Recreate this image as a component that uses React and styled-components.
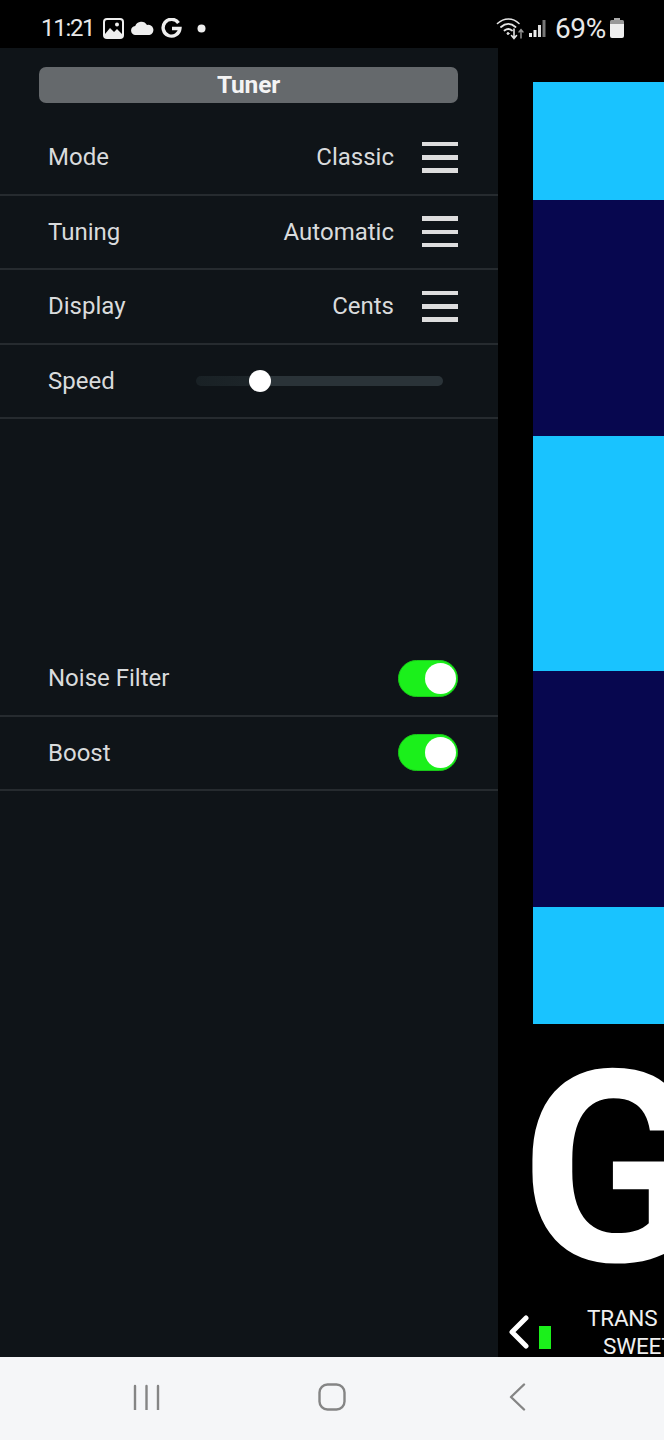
import React from 'react';
import styled, { createGlobalStyle } from 'styled-components';

const Global = createGlobalStyle`
  html, body { margin: 0; padding: 0; background: #000; }
  * { box-sizing: border-box; }
`;

const Screen = styled.div`
  width: 664px;
  height: 1440px;
  display: flex;
  flex-direction: column;
  overflow: hidden;
  background: #000;
  font-family: Roboto, "Liberation Sans", sans-serif;
  color: #d9dbdc;
`;

const StatusBar = styled.div`
  height: 48px;
  flex: none;
  display: flex;
  align-items: center;
  justify-content: space-between;
  padding: 0 40px 0 41px;
  color: #e8e8e8;
`;

const StatusGroup = styled.div`
  display: flex;
  align-items: center;
  height: 100%;
  padding-top: 8px;
`;

const Clock = styled.span`
  font-size: 24px;
  letter-spacing: -1.3px;
  margin-right: 9px;
`;

const Battery = styled.span`
  font-size: 28px;
  letter-spacing: -0.3px;
  margin: 0 4px 0 9px;
`;

const Gap = styled.span`
  width: ${p => p.$w}px;
`;

const Main = styled.div`
  flex: 1;
  min-height: 0;
  display: flex;
`;

const Panel = styled.div`
  width: 498px;
  flex: none;
  background: #0f1418;
  padding-top: 19px;
`;

const TitleBar = styled.div`
  width: 419px;
  height: 36px;
  margin: 0 0 18px 39px;
  padding-bottom: 2px;
  border-radius: 7px;
  background: #65696c;
  color: #f4f4f4;
  font-size: 24.5px;
  font-weight: 700;
  display: flex;
  align-items: center;
  justify-content: center;
  letter-spacing: -0.2px;
`;

const Row = styled.div`
  height: 74.5px;
  display: flex;
  align-items: center;
  justify-content: space-between;
  padding: 0 40px 0 48px;
  border-bottom: 2px solid #262b2f;
  font-size: 24px;
`;

const Value = styled.div`
  display: flex;
  align-items: center;
  gap: 28px;
`;

const Menu = styled.div`
  width: 36px;
  height: 31px;
  display: flex;
  flex-direction: column;
  justify-content: space-between;
`;

const MenuBar = styled.span`
  display: block;
  height: 4.5px;
  background: #dddddd;
`;

const Track = styled.div`
  position: relative;
  width: 247px;
  height: 10px;
  margin-right: 15px;
  border-radius: 5px;
  background: linear-gradient(90deg, #192125 0, #1d2529 26%, #2a3338 26%, #2a3338 100%);
`;

const Thumb = styled.span`
  position: absolute;
  left: 53px;
  top: -6px;
  width: 22px;
  height: 22px;
  border-radius: 50%;
  background: #fff;
`;

const Spacer = styled.div`
  height: 223px;
`;

const Toggle = styled.div`
  width: 60px;
  height: 37px;
  border-radius: 19px;
  background: #1bf01b;
  border: 1px solid #19c819;
  display: flex;
  align-items: center;
  justify-content: flex-end;
  padding-right: 1px;
`;

const Knob = styled.span`
  width: 31px;
  height: 31px;
  border-radius: 50%;
  background: #fff;
`;

const Side = styled.div`
  flex: 1;
  min-width: 0;
  overflow: hidden;
  display: flex;
  flex-direction: column;
  padding-top: 34px;
`;

const Blocks = styled.div`
  margin-left: 35px;
  display: flex;
  flex-direction: column;
`;

const Block = styled.div`
  height: ${p => p.$h}px;
  background: ${p => (p.$dark ? '#07074f' : '#19c3ff')};
`;

const BigNote = styled.div`
  height: 272px;
  padding: 0 0 0 22px;
  font-size: 268px;
  font-weight: 700;
  line-height: 290px;
  color: #fff;
  white-space: nowrap;
`;

const Foot = styled.div`
  flex: 1;
  min-height: 0;
  display: flex;
  align-items: flex-end;
  padding-left: 10px;
`;

const Chevron = styled.svg`
  flex: none;
  margin-bottom: 8px;
`;

const Level = styled.span`
  width: 12px;
  height: 23px;
  margin: 0 0 8px 10px;
  background: #1bf01b;
  flex: none;
`;

const Names = styled.div`
  margin: 0 0 -3px 36px;
  font-size: 22.5px;
  line-height: 28px;
  color: #f0f0f0;
  white-space: nowrap;
  letter-spacing: -0.2px;
`;

const Indented = styled.div`
  padding-left: 16px;
`;

const NavBar = styled.div`
  height: 83px;
  flex: none;
  background: #f5f6f8;
  display: flex;
  align-items: center;
  padding: 0 0 4px 133px;
  color: #858585;
`;

const NavSlot = styled.div`
  display: flex;
  margin-right: ${p => p.$gap}px;
`;

function PictureIcon() {
  return (
    <svg width="21" height="21" viewBox="0 0 21 21">
      <rect x="0" y="0" width="21" height="21" rx="4" fill="#eee" />
      <rect x="2" y="2" width="17" height="17" rx="2" fill="#000" />
      <path d="M2 16l5-6 4 4 3-3 5 5v3H2z" fill="#eee" />
      <circle cx="14" cy="6.5" r="2" fill="#eee" />
    </svg>
  );
}

function CloudIcon() {
  return (
    <svg width="23" height="14" viewBox="0 0 23 14">
      <path d="M5 14a4.5 4.5 0 0 1-.8-9A6.5 6.5 0 0 1 16 4a5 5 0 0 1 2.5 10z" fill="#eee" />
    </svg>
  );
}

function GoogleIcon() {
  return (
    <svg width="21" height="21" viewBox="0 0 21 21">
      <path d="M17.5 5a8.4 8.4 0 1 0 1.4 5.5H11" fill="none" stroke="#eee" strokeWidth="3.4" />
    </svg>
  );
}

function WifiIcon() {
  return (
    <svg width="29" height="24" viewBox="0 0 29 24" fill="none" stroke="#e4e4e4" strokeLinecap="round">
      <path d="M1.5 7.5C8 1.5 17 1.5 23 7.5" strokeWidth="1.6" />
      <path d="M5 11c4.500-4 10-4 14.500 0" strokeWidth="1.800" />
      <path d="M8.500 14.500c2.500-2 5-2 7.500 0" strokeWidth="1.800" />
      <circle cx="12" cy="17.500" r="1" fill="#e4e4e4" />
      <path d="M18 13v9M15.500 19.500l2.500 3 2.500-3" strokeWidth="1.600" />
      <path d="M25 22v-8M23 16l2-2.500 2 2.500" stroke="#999" strokeWidth="1.400" />
    </svg>
  );
}

function SignalIcon() {
  return (
    <svg width="17" height="17" viewBox="0 0 17 17">
      <rect x="0" y="13" width="3" height="4" fill="#eee" />
      <rect x="4.500" y="10" width="3" height="7" fill="#eee" />
      <rect x="9" y="5" width="3" height="12" fill="#ddd" />
      <rect x="13.500" y="0" width="3" height="17" fill="#777" />
    </svg>
  );
}

function BatteryIcon() {
  return (
    <svg width="14" height="20" viewBox="0 0 14 20">
      <path d="M4 0h6v2H4z" fill="#aaa" />
      <rect x="0" y="2" width="14" height="5" rx="1.500" fill="#999" />
      <path d="M0 6h14v12a2 2 0 0 1-2 2H2a2 2 0 0 1-2-2z" fill="#eee" />
    </svg>
  );
}

function MenuIcon() {
  return (
    <Menu>
      <MenuBar />
      <MenuBar />
      <MenuBar />
    </Menu>
  );
}

function Switch() {
  return (
    <Toggle>
      <Knob />
    </Toggle>
  );
}

const selects = [
  ['Mode', 'Classic'],
  ['Tuning', 'Automatic'],
  ['Display', 'Cents'],
];

export default function App() {
  return (
    <Screen>
      <Global />
      <StatusBar>
        <StatusGroup>
          <Clock>11:21</Clock>
          <PictureIcon />
          <Gap $w={7} />
          <CloudIcon />
          <Gap $w={7} />
          <GoogleIcon />
          <Gap $w={15} />
          <svg width="9" height="9"><circle cx="4.500" cy="4.500" r="4" fill="#eee" /></svg>
        </StatusGroup>
        <StatusGroup>
          <WifiIcon />
          <Gap $w={4} />
          <SignalIcon />
          <Battery>69%</Battery>
          <BatteryIcon />
        </StatusGroup>
      </StatusBar>
      <Main>
        <Panel>
          <TitleBar>Tuner</TitleBar>
          {selects.map(([label, value]) => (
            <Row key={label}>
              <span>{label}</span>
              <Value>
                <span>{value}</span>
                <MenuIcon />
              </Value>
            </Row>
          ))}
          <Row>
            <span>Speed</span>
            <Track>
              <Thumb />
            </Track>
          </Row>
          <Spacer />
          <Row>
            <span>Noise Filter</span>
            <Switch />
          </Row>
          <Row>
            <span>Boost</span>
            <Switch />
          </Row>
        </Panel>
        <Side>
          <Blocks>
            <Block $h={118} />
            <Block $h={236} $dark />
            <Block $h={235} />
            <Block $h={236} $dark />
            <Block $h={117} />
          </Blocks>
          <BigNote>G</BigNote>
          <Foot>
            <Chevron width="21" height="34" viewBox="0 0 21 34">
              <path d="M18 3L4 17l14 14" fill="none" stroke="#fff" strokeWidth="5" strokeLinecap="round" strokeLinejoin="round" />
            </Chevron>
            <Level />
            <Names>
              <div>TRANS</div>
              <Indented>SWEET</Indented>
            </Names>
          </Foot>
        </Side>
      </Main>
      <NavBar>
        <NavSlot $gap={158}>
          <svg width="27" height="26" viewBox="0 0 27 26" stroke="currentColor" strokeWidth="2.400" strokeLinecap="round">
            <path d="M2 2v24M13.500 2v24M25 2v24" />
          </svg>
        </NavSlot>
        <NavSlot $gap={163}>
          <svg width="28" height="28" viewBox="0 0 28 28" fill="none" stroke="currentColor" strokeWidth="2.400">
            <rect x="1.500" y="1.500" width="25" height="25" rx="8" />
          </svg>
        </NavSlot>
        <NavSlot>
          <svg width="17" height="28" viewBox="0 0 17 28" fill="none" stroke="currentColor" strokeWidth="2.400" strokeLinecap="round" strokeLinejoin="round">
            <path d="M15 1.500L2 14l13 12.500" />
          </svg>
        </NavSlot>
      </NavBar>
    </Screen>
  );
}
